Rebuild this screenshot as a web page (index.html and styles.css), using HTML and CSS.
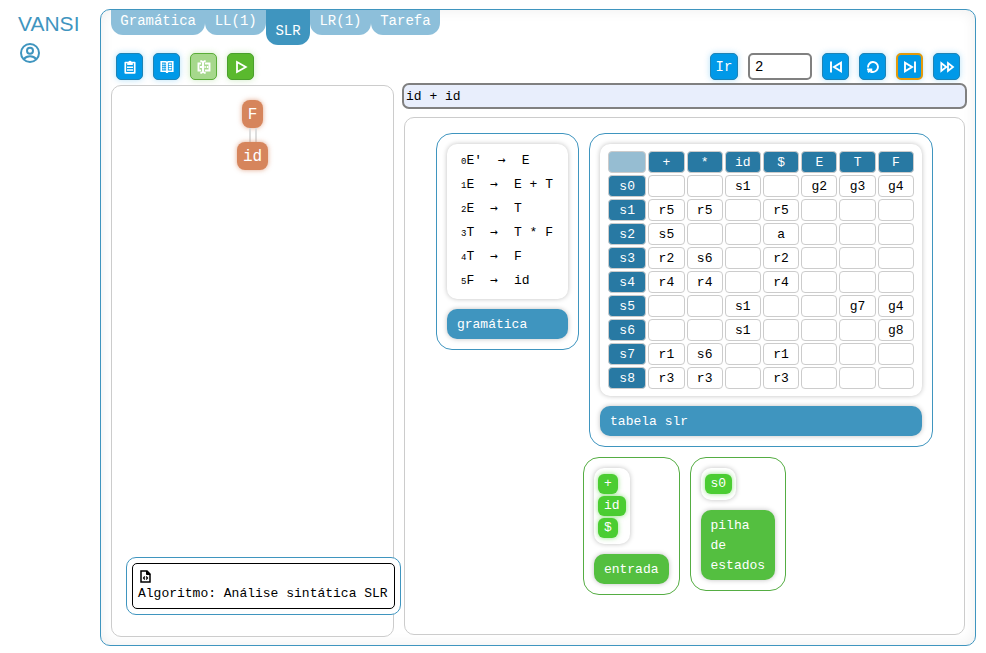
FILE: index.html
```html
<!DOCTYPE html>
<html lang="pt-BR">
<head>
<meta charset="utf-8">
<title>VANSI</title>
<link rel="stylesheet" href="styles.css">
</head>
<body>
<div class="app">
  <aside class="sidebar">
    <h1 class="brand">VANSI</h1>
    <a class="account" href="#" aria-label="Conta">
      <svg viewBox="0 0 20 20" width="20" height="20" fill="none" stroke="currentColor" stroke-width="2"><circle cx="10" cy="10" r="9"/><circle cx="10" cy="7.8" r="3"/><path d="M3.8 16.2C5.3 14.3 7.5 13.3 10 13.3s4.700 1 6.200 2.900"/></svg>
    </a>
  </aside>
  <main class="frame">
    <nav class="tabs">
      <button class="tab">Gramática</button>
      <button class="tab">LL(1)</button>
      <button class="tab tab-active">SLR</button>
      <button class="tab">LR(1)</button>
      <button class="tab">Tarefa</button>
    </nav>
    <div class="toolbar">
      <div class="tools">
        <button class="tool" aria-label="Colar"><svg viewBox="0 0 16 16" width="16" height="16"><path fill="none" stroke="currentColor" stroke-width="1.700" stroke-linejoin="round" d="M3.300 3.500h9.400v10.300H3.300z"/><path fill="currentColor" d="M5.200 6V3h1.200a1.700 1.700 0 0 1 3.200 0h1.200v3z"/><path stroke="currentColor" stroke-width="1.500" d="M5 8.200h6M5 11h6"/></svg></button>
        <button class="tool" aria-label="Livro"><svg viewBox="0 0 16 16" width="16" height="16" fill="none" stroke="currentColor"><path stroke-width="1.600" d="M2.200 2.700h4.500L8 3.500l1.300-.8h4.500v9.600H9.300L8 13l-1.300-.7H2.200z"/><path stroke-width="1.800" d="M8 3v11"/><path stroke-width="1.400" d="M3.500 5.300h1.200m.8 0h1M3.500 7.500h1.200m.8 0h1M3.500 9.700h1.200m.8 0h1M9.700 5.300h2.800M9.700 7.500h2.800M9.700 9.700h2.800"/></svg></button>
        <button class="tool tool-light" aria-label="Renomear"><svg viewBox="0 0 16 16" width="16" height="16" fill="none" stroke="currentColor"><path stroke-width="1.900" d="M5 4.500H2.500v7H5M9 4.500h4.500v7H9"/><path stroke-width="1.800" d="M4.300 2.200h1.200L7 3.200l1.500-1h1.200M4.300 13.800h1.200l1.500-1 1.500 1h1.200"/><path stroke-width="2.200" d="M7 3v10"/><path stroke-width="1.900" d="M4 8h2M8.500 8h1.300M10.800 8h1.500"/></svg></button>
        <button class="tool tool-green" aria-label="Executar"><svg viewBox="0 0 16 16" width="16" height="16"><path fill="none" stroke="currentColor" stroke-width="1.800" d="M4 3v10l8.800-5z"/></svg></button>
      </div>
      <div class="tools">
        <button class="tool tool-text">Ir</button>
        <input class="step" type="text" value="2" aria-label="Passo">
        <button class="tool" aria-label="Anterior"><svg viewBox="0 0 16 16" width="16" height="16"><path fill="none" stroke="currentColor" stroke-width="1.900" d="M3 2.500v11M13 3.800v8.400L6 8z"/></svg></button>
        <button class="tool" aria-label="Reiniciar"><svg viewBox="0 0 16 16" width="16" height="16"><path fill="none" stroke="currentColor" stroke-width="1.900" d="M3 8.500A5 5 0 1 1 8 13H5.500M2 10.500h4.300v3.500M3 13.200l3-2.700"/></svg></button>
        <button class="tool tool-focus" aria-label="Próximo"><svg viewBox="0 0 16 16" width="16" height="16"><path fill="none" stroke="currentColor" stroke-width="1.900" d="M13 2.500v11M3 3.800v8.400L10 8z"/></svg></button>
        <button class="tool" aria-label="Avançar tudo"><svg viewBox="0 0 16 16" width="16" height="16"><path fill="none" stroke="currentColor" stroke-width="1.800" d="M2.300 4v8l5-4zM9 4v8l5-4z"/></svg></button>
      </div>
    </div>
    <div class="work">
      <section class="tree-panel">
        <div class="tree">
          <span class="node">F</span>
          <span class="edge"></span>
          <span class="node">id</span>
        </div>
        <div class="algo">
          <div class="algo-box">
            <svg viewBox="0 0 11 13" width="11" height="13" fill="none" stroke="currentColor"><path stroke-width="1.500" d="M1 1h6l3 3v8H1z"/><path fill="currentColor" d="M6.500 1v3.500H10z"/><path stroke-width="1.200" d="M4.800 6.500L3.500 8l1.300 1.500M6.200 6.500L7.500 8 6.200 9.500"/></svg>
            <span>Algoritmo: Análise sintática SLR</span>
          </div>
        </div>
      </section>
      <section class="right">
        <input class="sentence" type="text" value="id + id" aria-label="Entrada">
        <div class="canvas">
          <div class="row">
            <article class="card">
              <div class="sheet grammar">
                <p><small>0</small>E'<i>→</i>E</p>
                <p><small>1</small>E<i>→</i>E + T</p>
                <p><small>2</small>E<i>→</i>T</p>
                <p><small>3</small>T<i>→</i>T * F</p>
                <p><small>4</small>T<i>→</i>F</p>
                <p><small>5</small>F<i>→</i>id</p>
              </div>
              <h2 class="label">gramática</h2>
            </article>
            <article class="card">
              <div class="sheet table-sheet">
                <table class="slr">
                  <tr><th class="corner"></th><th>+</th><th>*</th><th>id</th><th>$</th><th>E</th><th>T</th><th>F</th></tr>
                  <tr><th>s0</th><td></td><td></td><td>s1</td><td></td><td>g2</td><td>g3</td><td>g4</td></tr>
                  <tr><th>s1</th><td>r5</td><td>r5</td><td></td><td>r5</td><td></td><td></td><td></td></tr>
                  <tr><th>s2</th><td>s5</td><td></td><td></td><td>a</td><td></td><td></td><td></td></tr>
                  <tr><th>s3</th><td>r2</td><td>s6</td><td></td><td>r2</td><td></td><td></td><td></td></tr>
                  <tr><th>s4</th><td>r4</td><td>r4</td><td></td><td>r4</td><td></td><td></td><td></td></tr>
                  <tr><th>s5</th><td></td><td></td><td>s1</td><td></td><td></td><td>g7</td><td>g4</td></tr>
                  <tr><th>s6</th><td></td><td></td><td>s1</td><td></td><td></td><td></td><td>g8</td></tr>
                  <tr><th>s7</th><td>r1</td><td>s6</td><td></td><td>r1</td><td></td><td></td><td></td></tr>
                  <tr><th>s8</th><td>r3</td><td>r3</td><td></td><td>r3</td><td></td><td></td><td></td></tr>
                </table>
              </div>
              <h2 class="label">tabela slr</h2>
            </article>
          </div>
          <div class="row">
            <article class="card card-green">
              <div class="sheet stack"><span class="token">+</span><span class="token">id</span><span class="token">$</span></div>
              <h2 class="label">entrada</h2>
            </article>
            <article class="card card-green">
              <div class="sheet stack"><span class="token">s0</span></div>
              <h2 class="label">pilha<br>de<br>estados</h2>
            </article>
          </div>
        </div>
      </section>
    </div>
  </main>
</div>
</body>
</html>
```
FILE: styles.css
```css
* { box-sizing: border-box; }
body {
  margin: 0;
  background: #fff;
  color: #000;
  font: 13px/20px "Liberation Mono", monospace;
}
button, input { font: inherit; }
svg { display: block; }

.app {
  display: grid;
  grid-template-columns: 100px 1fr;
  min-height: 100vh;
  padding: 9px 10px 7px 0;
}
.sidebar { padding: 2px 0 0 18px; color: #3f95bf; }
.brand { margin: 0; font: 21px/26px "Liberation Sans", sans-serif; }
.account { display: block; width: 20px; margin: 6px 2px; color: inherit; }

.frame {
  display: flex;
  flex-direction: column;
  padding: 0 10px 8px;
  border: 1px solid #3f95bf;
  border-radius: 10px;
  box-shadow: inset 0 0 14px rgba(0, 0, 0, .07);
}

.tabs { display: flex; align-items: flex-start; width: 329px; height: 35px; }
.tab {
  flex: 1 1 auto;
  height: 25px;
  padding: 0 9px 4px;
  border: 0;
  border-radius: 0 0 12px 12px;
  background: #8dbfda;
  color: #fff;
  font-size: 14px;
  line-height: 20px;
}
.tab-active { height: 35px; padding: 6px 9px 0; background: #3f95bf; }

.toolbar { display: flex; justify-content: space-between; margin-top: 8px; padding: 0 5px; }
.tools { display: flex; gap: 10px; }
.tool {
  display: grid;
  place-items: center;
  width: 27px;
  height: 27px;
  padding: 0;
  border: 1px solid #1f83b5;
  border-radius: 5px;
  background: #0099e8;
  color: #fff;
  box-shadow: 0 0 6px rgba(0, 153, 232, .3);
}
.tool-light { border-color: #5aad38; background: #a6d88c; box-shadow: 0 0 6px rgba(90, 185, 50, .3); }
.tool-green { border-color: #4aa02c; background: #5ab92e; box-shadow: 0 0 6px rgba(90, 185, 50, .3); }
.tool-focus { border: 2px solid #e39a0c; }
.tool-text { width: 28px; font-size: 14px; }
.step {
  width: 64px;
  height: 27px;
  padding: 0 5px;
  border: 2px solid #808080;
  border-radius: 5px;
  background: #fff;
  font-size: 14px;
}

.work {
  display: grid;
  flex: 1;
  grid-template-columns: 283fr 561fr;
  gap: 10px;
  padding-top: 3px;
}
.tree-panel {
  display: flex;
  flex-direction: column;
  justify-content: space-between;
  min-width: 0;
  margin-top: 2px;
  padding: 14px 14px 21px;
  border: 1px solid #ccc;
  border-radius: 10px;
  background: #fff;
}
.tree { display: flex; flex-direction: column; align-items: center; }
.node {
  padding: 5px 6px 3px;
  border-radius: 8px;
  background: #d6855c;
  color: #fff;
  font-size: 16px;
  box-shadow: 0 0 5px rgba(214, 133, 92, .7);
}
.edge { width: 8px; height: 14px; border: solid #ddd; border-width: 0 2px; }
.algo {
  align-self: flex-start;
  padding: 5px;
  border: 1px solid #3f95bf;
  border-radius: 10px;
  background: #fff;
  white-space: nowrap;
}
.algo-box { padding: 6px 6px 4px 5px; border: 1px solid #000; border-radius: 5px; }
.algo-box svg { margin: 0 2px 1px; }
.algo-box span { display: block; }

.right { display: flex; flex-direction: column; gap: 8px; min-width: 0; padding-bottom: 2px; }
.sentence {
  height: 26px;
  margin: 0 -2px;
  padding: 0 2px;
  border: 2px solid #808080;
  border-radius: 7px;
  background: #e8eefc;
}
.canvas {
  display: flex;
  flex: 1;
  flex-direction: column;
  gap: 10px;
  padding: 15px;
  border: 1px solid #ccc;
  border-radius: 10px;
  background: #fff;
}
.row { display: flex; align-items: flex-start; justify-content: center; gap: 10px; }
.card {
  display: flex;
  flex-direction: column;
  gap: 10px;
  padding: 10px;
  border: 1px solid #3f95bf;
  border-radius: 16px;
}
.sheet { border-radius: 10px; background: #fff; box-shadow: 0 0 5px rgba(0, 0, 0, .25); }
.label {
  margin: 0;
  padding: 6px 10px 4px;
  border-radius: 10px;
  background: #3f95bf;
  color: #fff;
  font-size: 13px;
  font-weight: 400;
  box-shadow: 0 0 5px rgba(0, 0, 0, .25);
}
.card-green { border-color: #55ad43; }
.card-green .label { background: #54bf40; }

.grammar { padding: 5px 15px 6px 14px; }
.grammar p { height: 24px; margin: 0; line-height: 24px; white-space: pre; }
.grammar small { font-size: 9px; line-height: 1; }
.grammar i { margin: 0 16px; font: 13px/1 "DejaVu Sans Mono", monospace; }

.table-sheet { padding: 5px 6px; }
.slr { width: 310px; border-collapse: separate; border-spacing: 2px; }
.slr th, .slr td {
  width: 36px;
  height: 22px;
  padding: 1px 0 0;
  border: 1px solid #ccc;
  border-radius: 4px;
  line-height: 18px;
  text-align: center;
}
.slr th { background: #2879a3; color: #fff; font-weight: 400; }
.slr th:first-child { width: 38px; }
.slr .corner { background: #96bdd2; }

.stack {
  display: flex;
  flex-direction: column;
  align-self: flex-start;
  align-items: flex-start;
  gap: 2px;
  padding: 6px 4px;
}
.token {
  padding: 0 6px;
  border-radius: 6px;
  background: #4bcd32;
  color: #fff;
  box-shadow: 0 0 5px rgba(75, 205, 50, .6);
}
```
